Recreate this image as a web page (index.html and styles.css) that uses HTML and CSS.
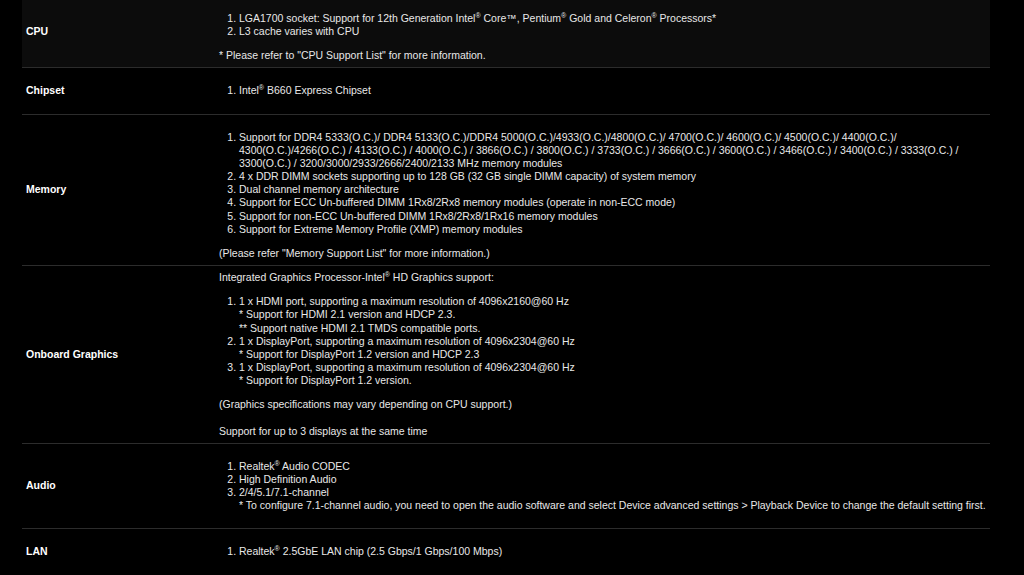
FILE: index.html
```html
<!DOCTYPE html>
<html lang="en">
<head>
<meta charset="utf-8">
<title>Specifications</title>
<link rel="stylesheet" href="styles.css">
</head>
<body>
<div class="spec">
  <div class="row row-alt">
    <div class="label">CPU</div>
    <div class="value">
      <ol>
        <li>LGA1700 socket: Support for 12th Generation Intel<sup>®</sup> Core™, Pentium<sup>®</sup> Gold and Celeron<sup>®</sup> Processors*</li>
        <li>L3 cache varies with CPU</li>
      </ol>
      <p>* Please refer to "CPU Support List" for more information.</p>
    </div>
  </div>
  <div class="row">
    <div class="label">Chipset</div>
    <div class="value">
      <ol>
        <li>Intel<sup>®</sup> B660 Express Chipset</li>
      </ol>
    </div>
  </div>
  <div class="row">
    <div class="label">Memory</div>
    <div class="value">
      <ol>
        <li>Support for DDR4 5333(O.C.)/ DDR4 5133(O.C.)/DDR4 5000(O.C.)/4933(O.C.)/4800(O.C.)/ 4700(O.C.)/ 4600(O.C.)/ 4500(O.C.)/ 4400(O.C.)/ 4300(O.C.)/4266(O.C.) / 4133(O.C.) / 4000(O.C.) / 3866(O.C.) / 3800(O.C.) / 3733(O.C.) / 3666(O.C.) / 3600(O.C.) / 3466(O.C.) / 3400(O.C.) / 3333(O.C.) / 3300(O.C.) / 3200/3000/2933/2666/2400/2133 MHz memory modules</li>
        <li>4 x DDR DIMM sockets supporting up to 128 GB (32 GB single DIMM capacity) of system memory</li>
        <li>Dual channel memory architecture</li>
        <li>Support for ECC Un-buffered DIMM 1Rx8/2Rx8 memory modules (operate in non-ECC mode)</li>
        <li>Support for non-ECC Un-buffered DIMM 1Rx8/2Rx8/1Rx16 memory modules</li>
        <li>Support for Extreme Memory Profile (XMP) memory modules</li>
      </ol>
      <p>(Please refer "Memory Support List" for more information.)</p>
    </div>
  </div>
  <div class="row">
    <div class="label">Onboard Graphics</div>
    <div class="value">
      <p>Integrated Graphics Processor-Intel<sup>®</sup> HD Graphics support:</p>
      <ol>
        <li>1 x HDMI port, supporting a maximum resolution of 4096x2160@60 Hz<br>* Support for HDMI 2.1 version and HDCP 2.3.<br>** Support native HDMI 2.1 TMDS compatible ports.</li>
        <li>1 x DisplayPort, supporting a maximum resolution of 4096x2304@60 Hz<br>* Support for DisplayPort 1.2 version and HDCP 2.3</li>
        <li>1 x DisplayPort, supporting a maximum resolution of 4096x2304@60 Hz<br>* Support for DisplayPort 1.2 version.</li>
      </ol>
      <p>(Graphics specifications may vary depending on CPU support.)<br><br>Support for up to 3 displays at the same time</p>
    </div>
  </div>
  <div class="row">
    <div class="label">Audio</div>
    <div class="value">
      <ol>
        <li>Realtek<sup>®</sup> Audio CODEC</li>
        <li>High Definition Audio</li>
        <li>2/4/5.1/7.1-channel<br>* To configure 7.1-channel audio, you need to open the audio software and select Device advanced settings &gt; Playback Device to change the default setting first.</li>
      </ol>
    </div>
  </div>
  <div class="row">
    <div class="label">LAN</div>
    <div class="value">
      <ol>
        <li>Realtek<sup>®</sup> 2.5GbE LAN chip (2.5 Gbps/1 Gbps/100 Mbps)</li>
      </ol>
    </div>
  </div>
</div>
</body>
</html>
```
FILE: styles.css
```css
html, body {
  margin: 0;
  padding: 0;
  background: #000;
  overflow: hidden;
}

body {
  font-family: "Liberation Sans", Arial, sans-serif;
  font-size: 10.5px;
  line-height: 13.15px;
  color: #e8e8e8;
}

.spec {
  margin: -4px 34px 0 22px;
}

.row {
  display: grid;
  grid-template-columns: 197px 1fr;
  border-bottom: 1px solid #2c2c2c;
}

.row-alt {
  background: #0c0c0c;
}

.label {
  align-self: center;
  padding-left: 4px;
  font-weight: bold;
  color: #fff;
}

.value {
  padding: 5px 0;
}

.value p {
  margin: 0;
}

.value ol {
  margin: 11px 0;
  padding-left: 20px;
}

sup {
  font-size: 7px;
  line-height: 0;
  vertical-align: 4px;
}
```
